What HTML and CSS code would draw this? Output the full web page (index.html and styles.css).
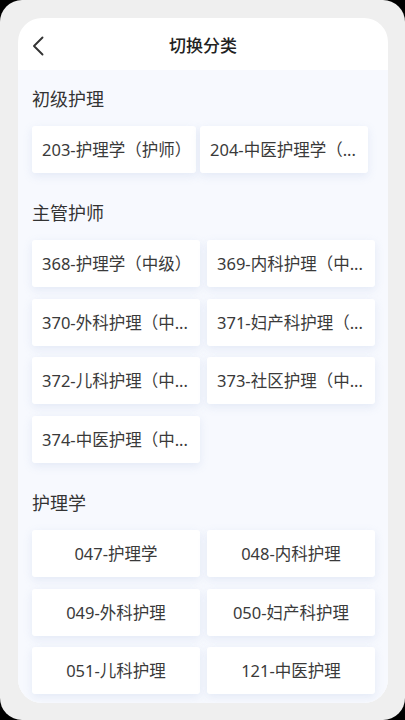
FILE: index.html
```html
<!DOCTYPE html>
<html lang="zh-CN">
<head>
<meta charset="utf-8">
<title>切换分类</title>
<link rel="stylesheet" href="styles.css">
</head>
<body>
<div class="screen">
  <div class="sheet">
    <header class="topbar">
      <button class="back" aria-label="返回">
        <svg width="12" height="20" viewBox="0 0 12 20"><path d="M10.5 1.5 L2 10 L10.5 18.5" fill="none" stroke="#333" stroke-width="1.9" stroke-linecap="round" stroke-linejoin="round"/></svg>
      </button>
      <h1 class="title">切换分类</h1>
      <span></span>
    </header>
    <main class="content">
      <section class="group group-first">
        <h2 class="group-title">初级护理</h2>
        <div class="grid grid-junior">
          <div class="item">203-护理学（护师）</div>
          <div class="item">204-中医护理学（...</div>
        </div>
      </section>
      <section class="group">
        <h2 class="group-title">主管护师</h2>
        <div class="grid">
          <div class="item">368-护理学（中级）</div>
          <div class="item">369-内科护理（中...</div>
          <div class="item">370-外科护理（中...</div>
          <div class="item">371-妇产科护理（...</div>
          <div class="item">372-儿科护理（中...</div>
          <div class="item">373-社区护理（中...</div>
          <div class="item">374-中医护理（中...</div>
        </div>
      </section>
      <section class="group">
        <h2 class="group-title">护理学</h2>
        <div class="grid grid-center">
          <div class="item">047-护理学</div>
          <div class="item">048-内科护理</div>
          <div class="item">049-外科护理</div>
          <div class="item">050-妇产科护理</div>
          <div class="item">051-儿科护理</div>
          <div class="item">121-中医护理</div>
        </div>
      </section>
    </main>
  </div>
</div>
</body>
</html>
```
FILE: styles.css
```css
* { box-sizing: border-box; }
html, body { margin: 0; padding: 0; }
body {
  background: #000;
  font-family: "Noto Sans", "Noto Sans CJK SC", sans-serif;
  color: #333;
}
.screen {
  width: 405px;
  height: 720px;
  border-radius: 22px;
  background: #efefef;
  padding: 18px 17px 17px 18px;
  overflow: hidden;
}
.sheet {
  width: 370px;
  height: 685px;
  border-radius: 24px;
  background: #fff;
  overflow: hidden;
  display: flex;
  flex-direction: column;
}
.topbar {
  height: 52px;
  flex: none;
  display: grid;
  grid-template-columns: 1fr auto 1fr;
  align-items: center;
  padding: 0 14px;
}
.back {
  border: 0;
  background: none;
  padding: 0;
  width: 12px;
  height: 20px;
  display: flex;
  margin-top: 3px;
}
.title {
  margin: 0;
  font-size: 17px;
  font-weight: 500;
  color: #222;
  line-height: 24px;
  margin-top: 4px;
}
.content {
  flex: 1;
  background: #f7f9fe;
  padding: 17px 13px 0 14px;
}
.group { margin-top: 28px; }
.group-first { margin-top: 0; }
.group-title {
  margin: 0 0 15px;
  font-size: 18px;
  font-weight: 400;
  line-height: 24px;
  color: #333;
}
.grid {
  display: grid;
  grid-template-columns: 168px 168px;
  column-gap: 7px;
  row-gap: 11.67px;
}
.grid-junior {
  grid-template-columns: 164px 168px;
  column-gap: 4px;
}
.item {
  height: 47px;
  line-height: 47px;
  background: #fff;
  border-radius: 3px;
  box-shadow: 0 3px 8px rgba(205, 216, 238, 0.45);
  padding: 0 4px 0 10px;
  font-size: 16.5px;
  color: #3a3a3a;
  white-space: nowrap;
  overflow: hidden;
}
.grid-center .item {
  text-align: center;
  padding: 0 4px;
}
```
